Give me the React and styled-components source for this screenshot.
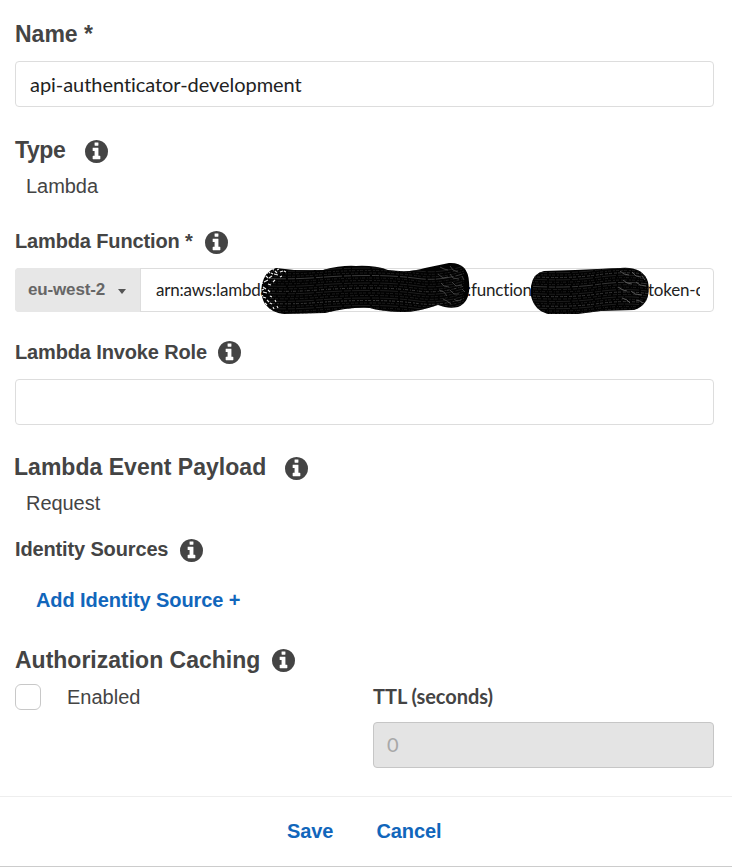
import React from "react";
import styled, { createGlobalStyle } from "styled-components";

const GlobalStyle = createGlobalStyle`
  * { box-sizing: border-box; }
  body { margin: 0; background: #fff; color: #444; font-family: "Liberation Sans", Arial, sans-serif; font-variant-ligatures: none; }
`;

const Panel = styled.form`
  width: 732px;
  height: 867px;
  display: flex;
  flex-direction: column;
  border-bottom: 1px solid #ccc;
  overflow: hidden;
`;

const Body = styled.div`
  height: 796px;
  flex: none;
  padding: 19px 18px 0 15px;
`;

const Label = styled.div`
  display: flex;
  align-items: center;
  height: 30px;
  margin-top: ${(p) => p.$top || 0}px;
  margin-left: ${(p) => p.$shift || 0}px;
  font-size: ${(p) => (p.$large ? 23 : 20)}px;
  letter-spacing: ${(p) => p.$spacing ?? -0.14}px;
  font-weight: 700;
  line-height: 30px;
  white-space: pre;
`;

const InfoSvg = styled.svg`
  width: 23px;
  height: 23px;
  flex: none;
  margin-left: ${(p) => p.$gap}px;
  margin-top: ${(p) => p.$drop ?? 2}px;
  fill: #444;
`;

const Value = styled.div`
  height: 30px;
  margin-top: 6px;
  padding-left: 11px;
  font-size: 20px;
  letter-spacing: -0.05px;
  line-height: 30px;
`;

const Input = styled.input`
  display: block;
  width: 100%;
  height: 46px;
  margin-top: ${(p) => p.$top || 12}px;
  padding: 0 14px 1px;
  border: 1px solid #ddd;
  border-radius: 4px;
  background: #fff;
  color: #222;
  font: 20px Lato, sans-serif;
  font-variant-ligatures: none;
  letter-spacing: -0.05px;
  outline: none;
  &:disabled {
    padding: 0 13px 2px;
    background: #e4e4e4;
    border-color: #c6c6c6;
    color: #a8a8a8;
  }
`;

const ArnGroup = styled.div`
  position: relative;
  display: flex;
  height: 44px;
  margin-top: 12px;
  border: 1px solid #ddd;
  border-radius: 4px;
`;

const Region = styled.button`
  display: flex;
  align-items: center;
  width: 126px;
  margin: -1px 0 -1px -1px;
  padding: 0 0 0 13px;
  border: 0;
  border-right: 1px solid #ddd;
  border-radius: 4px 0 0 4px;
  background: #e7e7e7;
  color: #666;
  font: 700 17px "Liberation Sans", Arial, sans-serif;
  letter-spacing: -0.15px;
`;

const Caret = styled.span`
  margin: 3px 0 0 13px;
  border: 4.5px solid transparent;
  border-top: 5px solid #555;
  border-bottom: 0;
`;

const Arn = styled.div`
  display: flex;
  flex: none;
  width: 544px;
  margin-left: 15px;
  overflow: hidden;
  color: #222;
  font: 17px/42px Lato, sans-serif;
  font-variant-ligatures: none;
  letter-spacing: -0.2px;
  white-space: nowrap;
`;

const ArnPart = styled.span`
  flex: none;
  width: ${(p) => p.$w}px;
`;

const Redaction = styled.svg`
  position: absolute;
  left: 244px;
  top: -7px;
  width: 394px;
  height: 56px;
`;

const LinkButton = styled.button`
  height: 30px;
  padding: 0;
  border: 0;
  background: none;
  color: #1166bb;
  font: 700 20px/30px "Liberation Sans", Arial, sans-serif;
  letter-spacing: -0.08px;
  white-space: nowrap;
`;

const AddRow = styled.div`
  display: flex;
  margin-top: 21px;
  padding-left: 21px;
`;

const Caching = styled.div`
  display: grid;
  grid-template-columns: 358px 341px;
  margin-top: 7px;
`;

const CheckLabel = styled.label`
  display: flex;
  align-items: center;
  height: 30px;
  font-size: 20px;
  gap: 26px;
`;

const Checkbox = styled.input`
  appearance: none;
  width: 26px;
  height: 26px;
  margin: 0;
  border: 1px solid #c8c8c8;
  border-radius: 6px;
  background: #fff;
`;

const TtlLabel = styled.label`
  display: block;
  height: 30px;
  font: 700 20px/28px Lato, sans-serif;
  letter-spacing: -0.06px;
  white-space: nowrap;
`;

const Footer = styled.footer`
  display: flex;
  flex: 1;
  align-items: flex-start;
  padding: 19px 0 0 287px;
  gap: 43px;
  border-top: 1px solid #eee;
`;

const Info = ({ gap, drop }) => (
  <InfoSvg $gap={gap} $drop={drop} viewBox="128 128 1536 1536" aria-hidden="true">
    <path d="M1152 1376v-160q0-14-9-23t-23-9h-96v-512q0-14-9-23t-23-9h-320q-14 0-23 9t-9 23v160q0 14 9 23t23 9h96v320h-96q-14 0-23 9t-9 23v160q0 14 9 23t23 9h448q14 0 23-9t9-23zm-128-896v-160q0-14-9-23t-23-9h-192q-14 0-23 9t-9 23v160q0 14 9 23t23 9h192q14 0 23-9t9-23zm640 416q0 209-103 385.5t-279.5 279.5-385.5 103-385.5-103-279.5-279.5-103-385.5 103-385.5 279.5-279.5 385.5-103 385.5 103 279.5 279.5 103 385.5z" />
  </InfoSvg>
);

const wave = (y, k) =>
  `M${8 + (k % 3)} ${y} Q32 ${y + 1} 58 ${y - 1} T110 ${y - 3} T158 ${y} T204 ${y - 5}`;
const streaks = Array.from({ length: 18 }, (_, k) => k);

const Marker = () => (
  <Redaction viewBox="0 0 394 56" aria-hidden="true">
    <clipPath id="ink-a">
      <path d="M2 22Q5 9 16 6L34 8L63 8Q82 3 96 4Q114 3 128 8Q150 11 165 6L189 1Q208 0 209 20Q211 40 198 45Q188 47 178 43Q155 51 140 50Q119 49 110 46Q89 45 65 51L24 52Q12 51 5 42Q0 34 2 22Z" />
    </clipPath>
    <clipPath id="ink-b">
      <path d="M271 24Q273 11 284 9L315 8L360 6Q383 4 388 20Q392 42 374 48L341 49L318 52L288 52Q274 48 271 34Z" />
    </clipPath>
    <g clipPath="url(#ink-a)">
      <rect width="212" height="56" fill="#020202" />
      <g fill="none" strokeWidth="0.8">
        {streaks.map((k) => (
          <path
            key={k}
            d={wave(9 + k * 2.5, k)}
            stroke={k % 5 === 3 ? "#4a4a4a" : "#262626"}
            strokeDasharray={k % 3 ? `${1 + (k % 4)} 1 3 2` : "18 2 7 1"}
          />
        ))}
      </g>
      <path
        d="M3 16l2-2M5 12l3-1M8 9l2 2M12 7l2 1M17 8l2-1M4 20l4-2M9 16l3-2M14 12l4 1M20 10l3-1M24 9l2 1M3 25l3 2M8 22l3 1M13 20l2-2M3 30l4 1M8 28l2 2M3 35l3 1M7 38l2 2M10 41l2 1M13 45l1 2M17 44l1 2M15 38l1 2M10 34l2 1M20 15l2-1M1 22l2-1M2 28l2-1M1 33l2 1M5 41l2 2M6 14l2 2M11 11l2 1M15 9l2 2"
        stroke="#eee"
        strokeWidth="1.1"
        fill="none"
      />
      <path
        d="M180 5l4 2l4 1M190 4l3 4l5 2M178 12l5 4l5-1M190 12l3 4l6 1M181 21l3 3l5 1M192 20l4 4l6-1M179 28l5 2l3 4M190 28l4 4l5 0M183 37l4 2l4 3M194 37l3 2l4-1M202 14l2 4M202 27l3 3"
        stroke="#505050"
        strokeWidth="0.8"
        fill="none"
      />
    </g>
    <g clipPath="url(#ink-b)">
      <rect x="268" width="126" height="56" fill="#020202" />
      <g fill="none" strokeWidth="0.8">
        {streaks.map((k) => (
          <path
            key={k}
            d={`M273 ${10 + k * 2.4} Q310 ${12 + k * 2.4} 338 ${8 + k * 2.4} T391 ${8 + k * 2.4}`}
            stroke={k % 4 === 2 ? "#444" : "#262626"}
            strokeDasharray={k % 3 ? `${1 + (k % 4)} 1 3 2` : "14 2 6 1"}
          />
        ))}
      </g>
      <path
        d="M360 9l4 3l5 1M372 10l4 4l5 1M363 18l4 3l5 1M376 20l4 3l6 1M358 25l5 3l4 1M371 29l4 3l7 1M362 36l5 2l3 3M376 38l4 1l3 2M382 14l3 4"
        stroke="#686868"
        strokeWidth="0.8"
        fill="none"
      />
    </g>
  </Redaction>
);

export default function App() {
  return (
    <>
      <GlobalStyle />
      <Panel>
        <Body>
          <Label $large $spacing={0}>Name *</Label>
          <Input defaultValue="api-authenticator-development" />
          <Label $large $spacing={-0.4} $top={28}>Type<Info gap={20} /></Label>
          <Value>Lambda</Value>
          <Label $top={25}>Lambda Function *<Info gap={12} /></Label>
          <ArnGroup>
            <Region type="button">eu-west-2<Caret /></Region>
            <Arn>
              <ArnPart $w={311}>arn:aws:lambda:</ArnPart>
              <ArnPart $w={181}>:function:</ArnPart>
              <ArnPart $w={60}>token-c</ArnPart>
            </Arn>
            <Marker />
          </ArnGroup>
          <Label $top={25}>Lambda Invoke Role<Info gap={11} drop={1} /></Label>
          <Input />
          <Label $large $spacing={0.02} $top={27} $shift={-1}>Lambda Event Payload<Info gap={19} drop={3} /></Label>
          <Value>Request</Value>
          <Label $top={16}>Identity Sources<Info gap={12} /></Label>
          <AddRow>
            <LinkButton type="button">Add Identity Source +</LinkButton>
          </AddRow>
          <Label $large $spacing={0} $top={30}>Authorization Caching<Info gap={12} drop={1} /></Label>
          <Caching>
            <CheckLabel><Checkbox type="checkbox" />Enabled</CheckLabel>
            <div>
              <TtlLabel>TTL (seconds)</TtlLabel>
              <Input $top={10} disabled defaultValue="0" />
            </div>
          </Caching>
        </Body>
        <Footer>
          <LinkButton type="button">Save</LinkButton>
          <LinkButton type="button">Cancel</LinkButton>
        </Footer>
      </Panel>
    </>
  );
}
